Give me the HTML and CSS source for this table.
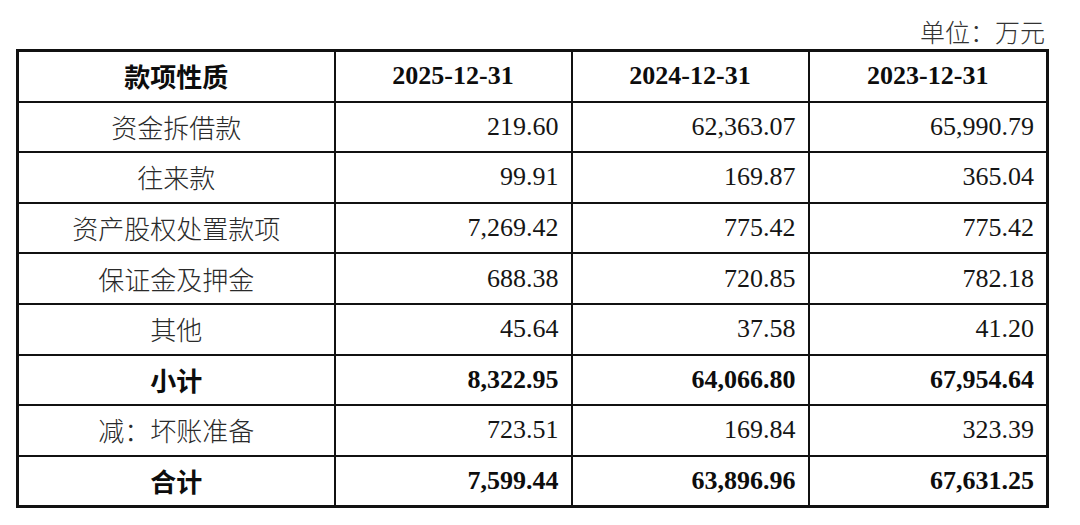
FILE: index.html
```html
<!DOCTYPE html>
<html lang="zh-CN">
<head>
<meta charset="utf-8">
<title>款项性质</title>
<link rel="stylesheet" href="styles.css">
</head>
<body>
<div class="page">
  <div class="unit">单位：万元</div>
  <table class="fin">
    <colgroup>
      <col class="c1"><col class="c2"><col class="c3"><col class="c4">
    </colgroup>
    <thead>
      <tr class="head">
        <th class="label">款项性质</th>
        <th>2025-12-31</th>
        <th>2024-12-31</th>
        <th>2023-12-31</th>
      </tr>
    </thead>
    <tbody>
      <tr><td class="label">资金拆借款</td><td class="num">219.60</td><td class="num">62,363.07</td><td class="num">65,990.79</td></tr>
      <tr><td class="label">往来款</td><td class="num">99.91</td><td class="num">169.87</td><td class="num">365.04</td></tr>
      <tr><td class="label">资产股权处置款项</td><td class="num">7,269.42</td><td class="num">775.42</td><td class="num">775.42</td></tr>
      <tr><td class="label">保证金及押金</td><td class="num">688.38</td><td class="num">720.85</td><td class="num">782.18</td></tr>
      <tr><td class="label">其他</td><td class="num">45.64</td><td class="num">37.58</td><td class="num">41.20</td></tr>
      <tr class="bold"><td class="label">小计</td><td class="num">8,322.95</td><td class="num">64,066.80</td><td class="num">67,954.64</td></tr>
      <tr><td class="label">减：坏账准备</td><td class="num">723.51</td><td class="num">169.84</td><td class="num">323.39</td></tr>
      <tr class="bold"><td class="label">合计</td><td class="num">7,599.44</td><td class="num">63,896.96</td><td class="num">67,631.25</td></tr>
    </tbody>
  </table>
</div>
</body>
</html>
```

FILE: styles.css
```css
html, body {
  margin: 0;
  padding: 0;
  background: #ffffff;
}

.page {
  width: 1030px;
  margin-left: 16px;
  font-family: "Liberation Serif", "Noto Sans CJK SC", serif;
  color: #151515;
}

.unit {
  height: 49px;
  display: flex;
  align-items: flex-end;
  justify-content: flex-end;
  box-sizing: border-box;
  padding-right: 1px;
  padding-bottom: 3px;
  font-family: "Noto Sans CJK SC", sans-serif;
  font-weight: 300;
  font-size: 25px;
  line-height: 30px;
  color: #333333;
}

.fin {
  width: 1030px;
  border-collapse: collapse;
  border: 3px solid #111111;
  table-layout: fixed;
}

.c1 { width: 317px; }
.c2 { width: 237px; }
.c3 { width: 237px; }
.c4 { width: 239px; }

.fin th,
.fin td {
  border: 2px solid #111111;
  height: 48.6px;
  padding: 0 12px 0 0;
  font-size: 26px;
  line-height: 30px;
  vertical-align: middle;
}

.fin th {
  font-weight: 700;
  text-align: center;
  padding: 0;
  color: #0d0d0d;
}

.fin th.label {
  font-family: "Noto Sans CJK SC", sans-serif;
  font-weight: 700;
}

.fin td.label {
  text-align: center;
  padding: 0;
  font-family: "Noto Sans CJK SC", sans-serif;
  font-weight: 300;
  color: #2a2a2a;
}

.fin td.num {
  text-align: right;
  color: #151515;
}

.fin tr.bold td {
  font-weight: 700;
  color: #0d0d0d;
}

.fin tr.bold td.label {
  font-weight: 700;
}
```
